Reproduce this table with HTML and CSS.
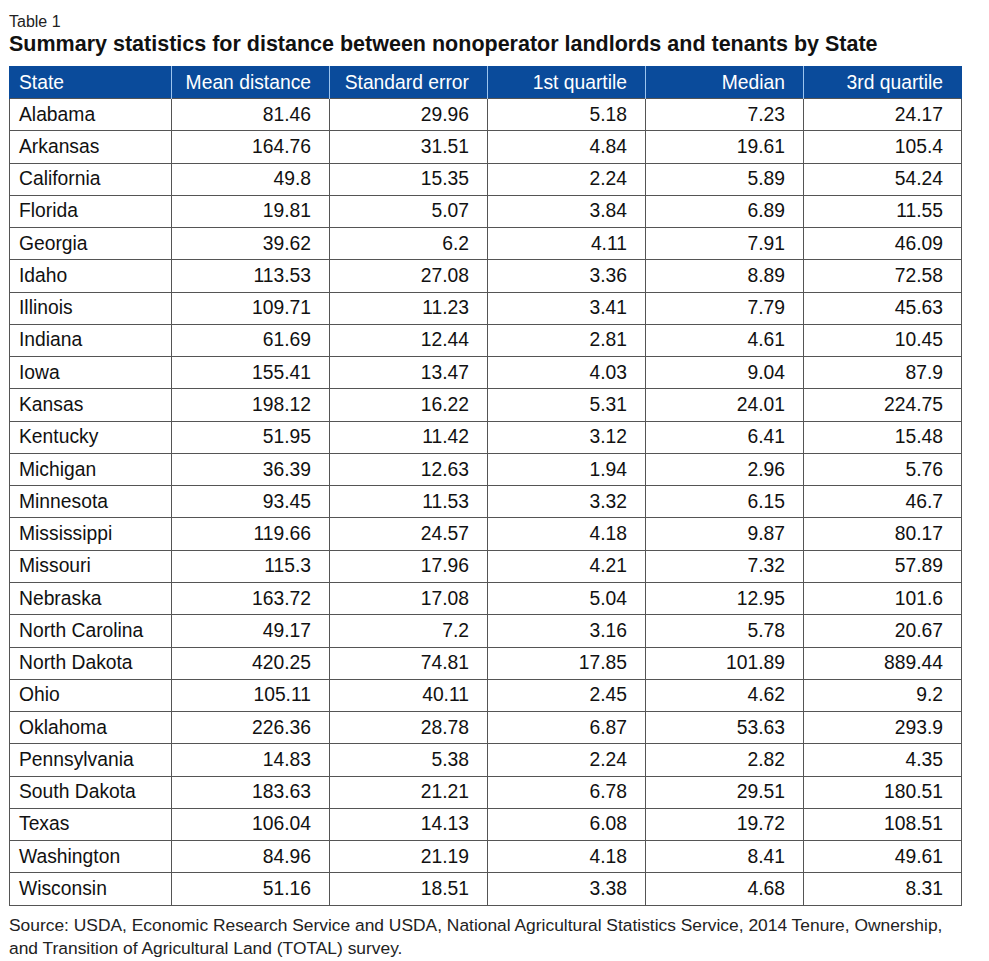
FILE: index.html
```html
<!DOCTYPE html>
<html lang="en">
<head>
<meta charset="UTF-8">
<meta name="viewport" content="width=device-width, initial-scale=1.0">
<title>Table 1</title>
<link rel="stylesheet" href="styles.css">
</head>

<body>
<div class="wrap">
    <p class="label">Table 1</p>
    <h1 class="title">Summary statistics for distance between nonoperator landlords and tenants by State</h1>

    <table class="stats">
        <thead>
            <tr>
                <th class="state">State</th>
                <th>Mean distance</th>
                <th>Standard error</th>
                <th>1st quartile</th>
                <th>Median</th>
                <th>3rd quartile</th>
            </tr>
        </thead>
        <tbody>
            <tr><td class="state">Alabama</td><td>81.46</td><td>29.96</td><td>5.18</td><td>7.23</td><td>24.17</td></tr>
            <tr><td class="state">Arkansas</td><td>164.76</td><td>31.51</td><td>4.84</td><td>19.61</td><td>105.4</td></tr>
            <tr><td class="state">California</td><td>49.8</td><td>15.35</td><td>2.24</td><td>5.89</td><td>54.24</td></tr>
            <tr><td class="state">Florida</td><td>19.81</td><td>5.07</td><td>3.84</td><td>6.89</td><td>11.55</td></tr>
            <tr><td class="state">Georgia</td><td>39.62</td><td>6.2</td><td>4.11</td><td>7.91</td><td>46.09</td></tr>
            <tr><td class="state">Idaho</td><td>113.53</td><td>27.08</td><td>3.36</td><td>8.89</td><td>72.58</td></tr>
            <tr><td class="state">Illinois</td><td>109.71</td><td>11.23</td><td>3.41</td><td>7.79</td><td>45.63</td></tr>
            <tr><td class="state">Indiana</td><td>61.69</td><td>12.44</td><td>2.81</td><td>4.61</td><td>10.45</td></tr>
            <tr><td class="state">Iowa</td><td>155.41</td><td>13.47</td><td>4.03</td><td>9.04</td><td>87.9</td></tr>
            <tr><td class="state">Kansas</td><td>198.12</td><td>16.22</td><td>5.31</td><td>24.01</td><td>224.75</td></tr>
            <tr><td class="state">Kentucky</td><td>51.95</td><td>11.42</td><td>3.12</td><td>6.41</td><td>15.48</td></tr>
            <tr><td class="state">Michigan</td><td>36.39</td><td>12.63</td><td>1.94</td><td>2.96</td><td>5.76</td></tr>
            <tr><td class="state">Minnesota</td><td>93.45</td><td>11.53</td><td>3.32</td><td>6.15</td><td>46.7</td></tr>
            <tr><td class="state">Mississippi</td><td>119.66</td><td>24.57</td><td>4.18</td><td>9.87</td><td>80.17</td></tr>
            <tr><td class="state">Missouri</td><td>115.3</td><td>17.96</td><td>4.21</td><td>7.32</td><td>57.89</td></tr>
            <tr><td class="state">Nebraska</td><td>163.72</td><td>17.08</td><td>5.04</td><td>12.95</td><td>101.6</td></tr>
            <tr><td class="state">North Carolina</td><td>49.17</td><td>7.2</td><td>3.16</td><td>5.78</td><td>20.67</td></tr>
            <tr><td class="state">North Dakota</td><td>420.25</td><td>74.81</td><td>17.85</td><td>101.89</td><td>889.44</td></tr>
            <tr><td class="state">Ohio</td><td>105.11</td><td>40.11</td><td>2.45</td><td>4.62</td><td>9.2</td></tr>
            <tr><td class="state">Oklahoma</td><td>226.36</td><td>28.78</td><td>6.87</td><td>53.63</td><td>293.9</td></tr>
            <tr><td class="state">Pennsylvania</td><td>14.83</td><td>5.38</td><td>2.24</td><td>2.82</td><td>4.35</td></tr>
            <tr><td class="state">South Dakota</td><td>183.63</td><td>21.21</td><td>6.78</td><td>29.51</td><td>180.51</td></tr>
            <tr><td class="state">Texas</td><td>106.04</td><td>14.13</td><td>6.08</td><td>19.72</td><td>108.51</td></tr>
            <tr><td class="state">Washington</td><td>84.96</td><td>21.19</td><td>4.18</td><td>8.41</td><td>49.61</td></tr>
            <tr><td class="state">Wisconsin</td><td>51.16</td><td>18.51</td><td>3.38</td><td>4.68</td><td>8.31</td></tr>
        </tbody>
    </table>

    <p class="source">Source: USDA, Economic Research Service and USDA, National Agricultural Statistics Service, 2014 Tenure, Ownership, and Transition of Agricultural Land (TOTAL) survey.</p>
</div>
</body>
</html>
```

FILE: styles.css
```css
body {
    margin: 0;
    background-color: #ffffff;
    color: #111111;
    font-family: "Liberation Sans", Arial, sans-serif;
}
.wrap {
    padding: 12px 27px 0 9px;
}
.label {
    margin: 0;
    font-size: 16px;
    line-height: 19px;
    color: #222222;
}
.title {
    margin: 0 0 8px 0;
    font-size: 21.5px;
    line-height: 27px;
    font-weight: bold;
    color: #111111;
}
.stats {
    width: 953px;
    border-collapse: collapse;
    table-layout: fixed;
    font-size: 19.3px;
}
.stats th, .stats td {
    text-align: right;
    padding: 0 18px 0 9px;
    height: 32.28px;
    box-sizing: border-box;
}
.stats th {
    background-color: #0a4b9b;
    color: #ffffff;
    font-weight: normal;
    height: 32px;
    border-left: 1px solid #9cc4ee;
    border-right: 1px solid #9cc4ee;
    border-top: 1px solid #0a4b9b;
}
.stats th:first-child {
    border-left: 1px solid #0a4b9b;
    width: 162px;
}
.stats th:last-child {
    border-right: 1px solid #0a4b9b;
}
.stats td {
    border: 1px solid #555555;
    color: #111111;
}
.stats .state {
    text-align: left;
}
.source {
    max-width: 940px;
    margin: 8px 0 0 0;
    font-size: 17.4px;
    line-height: 23px;
    color: #222222;
}
```
